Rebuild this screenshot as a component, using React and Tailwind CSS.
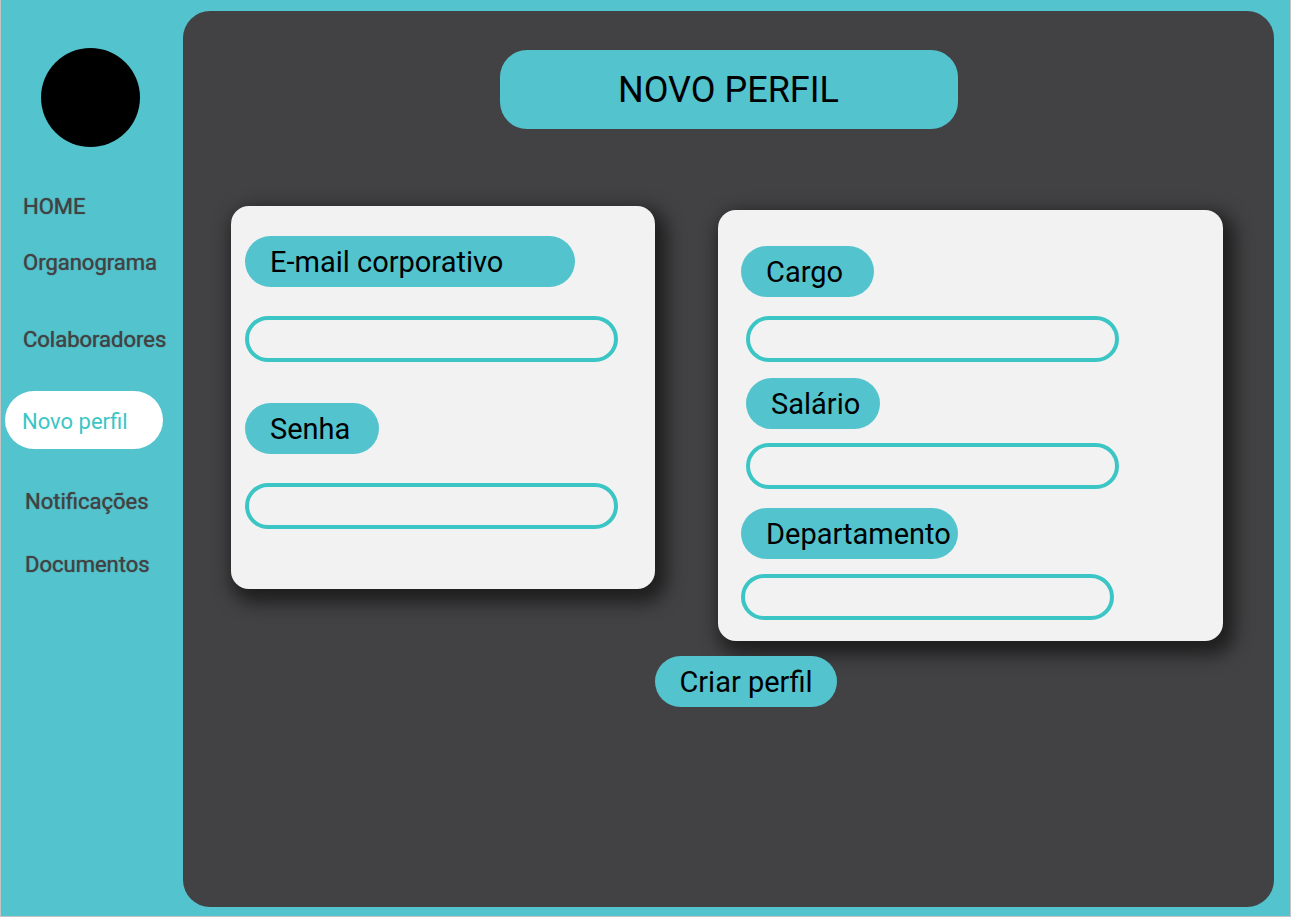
import { useId } from "react";

const navGroups = [
  {
    className: "pl-[22px]",
    items: [
      { label: "HOME", className: "" },
      { label: "Organograma", className: "mt-[30px]" },
      { label: "Colaboradores", className: "mt-[51px]" },
    ],
  },
  {
    className: "mt-[38px] pl-1",
    items: [{ label: "Novo perfil", active: true }],
  },
  {
    className: "mt-10 pl-6",
    items: [
      { label: "Notificações", className: "" },
      { label: "Documentos", className: "mt-[37px]" },
    ],
  },
];

function NavLink({ item }) {
  if (item.active) {
    return (
      <a
        href="#novo-perfil"
        aria-current="page"
        className="flex h-[58px] w-[158px] items-center rounded-[29px] bg-white pt-[3px] pl-[17px] text-[#3bc5c5]"
      >
        {item.label}
      </a>
    );
  }
  return (
    <a
      href={"#" + item.label.toLowerCase()}
      className={"[text-shadow:0_0_1px_#424244] " + item.className}
    >
      {item.label}
    </a>
  );
}

function Sidebar() {
  return (
    <aside className="w-[182px] shrink-0 pt-12">
      <div className="ml-10 size-[99px] rounded-full bg-black" />
      <nav className="mt-[47px] flex flex-col text-[22px] leading-[26px] text-[#424244]">
        {navGroups.map((group) => (
          <div
            key={group.items[0].label}
            className={"flex flex-col items-start " + group.className}
          >
            {group.items.map((item) => (
              <NavLink key={item.label} item={item} />
            ))}
          </div>
        ))}
      </nav>
    </aside>
  );
}

function Field({ label, type = "text", className = "", labelClass = "", inputClass = "" }) {
  const id = useId();
  return (
    <div className={"flex flex-col items-start " + className}>
      <label
        htmlFor={id}
        className={
          "flex h-[51px] items-center rounded-[26px] bg-[#53c3ce] pl-[25px] text-[29px] leading-[34px] whitespace-nowrap text-black " +
          labelClass
        }
      >
        {label}
      </label>
      <input
        id={id}
        type={type}
        className={
          "h-[46px] w-full max-w-[373px] rounded-[23px] border-4 border-[#3bc5c5] bg-transparent px-5 text-xl text-black outline-none " +
          inputClass
        }
      />
    </div>
  );
}

function Card({ className, children }) {
  return (
    <section
      className={
        "rounded-[18px] bg-[#f2f2f2] shadow-[6px_8px_18px_6px_rgba(0,0,0,0.55)] " + className
      }
    >
      {children}
    </section>
  );
}

export default function App() {
  return (
    <div className="flex min-h-screen border-r border-b border-l border-[#c4c4c4] bg-[#53c3ce] font-[Roboto,sans-serif]">
      <Sidebar />
      <main className="mt-[11px] mr-4 mb-[9px] flex min-w-0 flex-1 flex-col items-center rounded-[27px] bg-[#424244] px-12 pt-[39px]">
        <h1 className="flex h-[79px] w-full max-w-[458px] items-center justify-center rounded-[27px] bg-[#53c3ce] text-[36px] leading-[42px] text-black">
          NOVO PERFIL
        </h1>
        <form className="mt-[77px] flex w-full flex-col items-center">
          <div className="grid w-full grid-cols-[424fr_505fr] items-start gap-x-[63px] pr-[3px]">
            <Card className="px-[14px] pt-[30px] pb-[60px]">
              <Field label="E-mail corporativo" labelClass="w-[330px]" inputClass="mt-[29px]" />
              <Field
                label="Senha"
                type="password"
                className="mt-[41px]"
                labelClass="w-[134px]"
                inputClass="mt-[29px]"
              />
            </Card>
            <Card className="mt-1 px-[23px] pt-[36px] pb-[21px]">
              <Field label="Cargo" labelClass="w-[133px]" inputClass="mt-[19px] ml-[5px]" />
              <Field
                label="Salário"
                className="mt-4 pl-[5px]"
                labelClass="w-[134px]"
                inputClass="mt-[14px]"
              />
              <Field
                label="Departamento"
                className="mt-[19px]"
                labelClass="w-[217px]"
                inputClass="mt-[15px]"
              />
            </Card>
          </div>
          <button
            type="submit"
            className="z-10 mt-[15px] ml-[35px] flex h-[51px] items-center rounded-[26px] bg-[#53c3ce] px-6 text-[29px] leading-[34px] text-black"
          >
            Criar perfil
          </button>
        </form>
      </main>
    </div>
  );
}
